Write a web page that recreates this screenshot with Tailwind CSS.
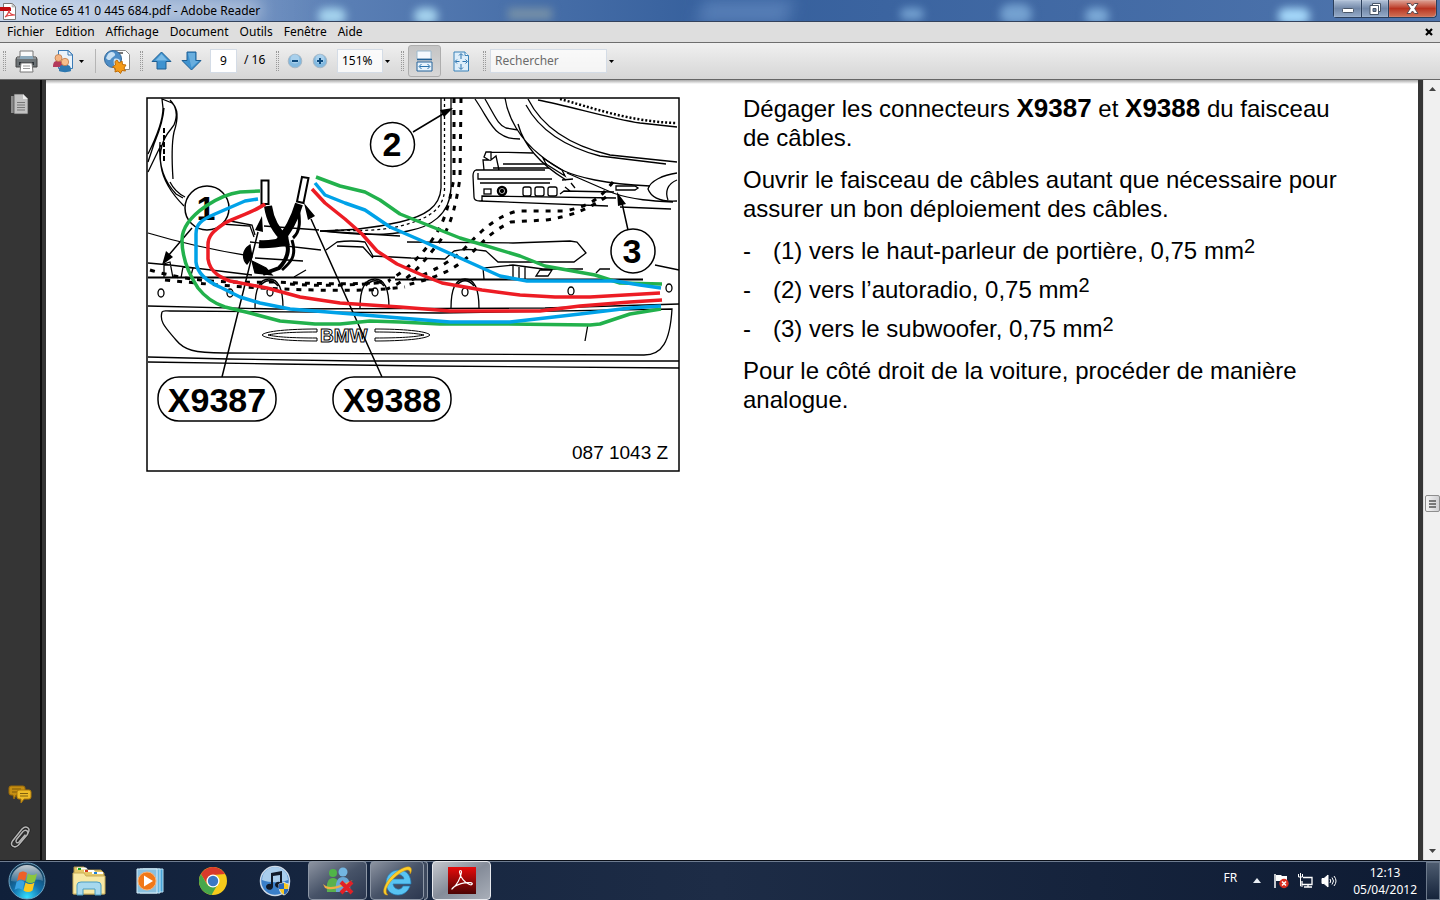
<!DOCTYPE html>
<html lang="fr">
<head>
    <meta charset="UTF-8">
    <meta name="viewport" content="width=device-width, initial-scale=1.0">
    <title>Notice 65 41 0 445 684.pdf - Adobe Reader</title>
    <script src="https://cdn.jsdelivr.net/npm/@tailwindcss/browser@4"></script>
</head>
<body>
    <div class="flex h-screen flex-col overflow-hidden bg-white font-['Noto_Sans','Open_Sans',sans-serif] text-[12px] text-black">

        <!-- Title bar -->
        <header class="relative flex h-[21px] shrink-0 items-center overflow-hidden bg-linear-to-r from-[#7c9ccb] via-[#355f9c] to-[#4f75ad]">
            <div class="absolute inset-y-0 left-0 w-[340px] bg-linear-to-r from-white/50 via-white/20 to-transparent"></div>
            <div class="absolute -left-2 top-0 h-5 w-[270px] rounded-full bg-white/40 blur-sm"></div>
            <div class="absolute left-[318px] top-2 h-4 w-7 rounded-full bg-[#a5d3ee] blur-xs"></div>
            <div class="absolute left-[414px] top-2 h-4 w-6 rounded-full bg-[#a5d3ee] blur-xs"></div>
            <div class="absolute left-[508px] top-2 h-3 w-11 bg-[#7590a8] blur-xs"></div>
            <div class="absolute left-[700px] top-0 h-6 w-[90px] -skew-x-12 bg-[#6d92c8]/60 blur-sm"></div>
            <div class="absolute left-[900px] top-2 h-3 w-6 rounded-full bg-[#8ab9e4]/70 blur-xs"></div>
            <div class="absolute left-[1000px] top-1 h-5 w-8 rounded-full bg-[#8ab9e4]/70 blur-xs"></div>
            <div class="absolute left-[1085px] top-2 h-4 w-6 rounded-full bg-[#8ab9e4]/80 blur-xs"></div>
            <div class="absolute left-[1278px] top-2 h-4 w-8 rounded-full bg-[#a5d8fa] blur-xs"></div>
            <svg class="relative h-[18px] w-[17px] shrink-0" viewBox="0 0 17 18">
                <path d="M3.500 1.500h9l3 3v13h-12z" fill="#fff" stroke="#777"/>
                <path d="M12 1.500v3.500h3.500z" fill="#ccc" stroke="#999" stroke-width=".5"/>
                <path d="M0 5h10l1 1v3H0z" fill="#c00d12"/>
                <path d="M5 15c2-1 4-5 4-7 0 4 3 5 6 5-4 0-7 0-10 2" fill="none" stroke="#d44" stroke-width="1.200"/>
            </svg>
            <h1 class="relative ml-1 whitespace-nowrap text-[12px] leading-5">Notice 65 41 0 445 684.pdf - Adobe Reader</h1>
            <div class="relative mr-[3px] ml-auto flex h-[18px] self-start rounded-b border border-t-0 border-[#2b3f5c]">
                <button aria-label="Réduire" class="flex w-7 items-center justify-center border-r border-[#2b3f5c] bg-linear-to-b from-[#b4c4da] via-[#7288a8] to-[#95abc9] shadow-[inset_0_0_1px_#fff]">
                    <svg width="12" height="5" viewBox="0 0 12 5" class="mt-[3px]"><rect x=".5" y=".5" width="11" height="4" rx="1" fill="#fff" stroke="#495668"/></svg>
                </button>
                <button aria-label="Restaurer" class="flex w-[27px] items-center justify-center border-r border-[#2b3f5c] bg-linear-to-b from-[#b4c4da] via-[#7288a8] to-[#95abc9] shadow-[inset_0_0_1px_#fff]">
                    <svg width="13" height="12" viewBox="0 0 13 12"><path d="M3.500.5h8v8h-8z" fill="#fff" stroke="#495668"/><path d="M1 2.500h8.500v9H1z" fill="#fff" stroke="#495668"/><path d="M4 5.500h3v3H4z" fill="#7288a8" stroke="#495668"/></svg>
                </button>
                <button aria-label="Fermer" class="flex w-[47px] items-center justify-center rounded-br bg-linear-to-b from-[#dda397] via-[#b93320] to-[#d07157] shadow-[inset_0_0_1px_#fff]">
                    <svg width="13" height="11" viewBox="0 0 13 11"><path d="M1 .5h3.500l2 2.500 2-2.500H12L8.700 5.500 12 10.500H8.500l-2-2.500-2 2.500H1l3.300-5z" fill="#fff" stroke="#5a4a50"/></svg>
                </button>
            </div>
        </header>

        <!-- Menu bar -->
        <nav class="flex h-[22px] shrink-0 items-center gap-[11px] border-t border-b border-t-[#33425c] border-b-[#6e6e6e] bg-[#dedede] pb-px pl-[7px]">
            <button>Fichier</button>
            <button>Edition</button>
            <button>Affichage</button>
            <button>Document</button>
            <button>Outils</button>
            <button>Fenêtre</button>
            <button>Aide</button>
            <button aria-label="Fermer le document" class="mr-[7px] ml-auto">
                <svg width="8" height="8" viewBox="0 0 8 8"><path d="M1 1l6 6M7 1L1 7" stroke="#000" stroke-width="2.200"/></svg>
            </button>
        </nav>

        <!-- Toolbar -->
        <div class="flex h-[37px] shrink-0 items-center border-b border-[#666] bg-linear-to-b from-[#f0f0f0] to-[#d6d6d6] pl-[3px]">
            <div class="h-5 w-[3px] border-x border-dotted border-[#999]"></div>
            <button aria-label="Imprimer" class="ml-[9px]">
                <svg width="23" height="24" viewBox="0 0 23 24">
                    <path d="M5 2h13v8H5z" fill="#fafafa" stroke="#777"/>
                    <path d="M2 8h19l1 2v8H1v-8z" fill="#6d7376" stroke="#444"/>
                    <path d="M2 9h19" stroke="#b5babd"/>
                    <path d="M5 7h13v3H5z" fill="#8da9bb"/>
                    <path d="M4 13h15v3H4z" fill="#2d3338"/>
                    <path d="M6 14h11l1 9H5z" fill="#fff" stroke="#777"/>
                    <path d="M8 17h7M8 19.500h7" stroke="#999"/>
                </svg>
            </button>
            <button aria-label="Collaborer" class="ml-[14px]">
                <svg width="24" height="24" viewBox="0 0 24 24">
                    <path d="M6.500 1.500h10l4 4v14h-14z" fill="#eaf3fb" stroke="#3a7ab5"/>
                    <path d="M16 1.500v4.500h4.500z" fill="#fff" stroke="#3a7ab5"/>
                    <path d="M1 18c0-4 1-6 4-6h3c2 0 3 2 3 6z" fill="#b33a5c"/>
                    <circle cx="6.500" cy="9" r="3.500" fill="#f4b483" stroke="#b8703c" stroke-width=".7"/>
                    <path d="M7 22c0-4 1-6 4-6h4c3 0 4 2 4 6-3 1.500-9 1.500-12 0" fill="#2e78b0"/>
                    <circle cx="13" cy="13" r="3.700" fill="#f7be8c" stroke="#b8703c" stroke-width=".7"/>
                </svg>
            </button>
            <button aria-label="Options de collaboration" class="ml-[3px]"><svg width="5" height="3" viewBox="0 0 5 3"><path d="M0 0h5L2.500 3z"/></svg></button>
            <div class="ml-[11px] h-6 w-px bg-[#b5b5b5]"></div>
            <button aria-label="Acrobat.com" class="ml-2">
                <svg width="27" height="25" viewBox="0 0 27 25">
                    <path d="M10.500 1.500h11l4 4v15h-15z" fill="#fff" stroke="#888"/>
                    <path d="M13 4h6" stroke="#777" stroke-width="2"/>
                    <circle cx="9" cy="10" r="8.500" fill="#4d8dc6" stroke="#356a9c"/>
                    <path d="M4 5c3-3 6-2 7 0s-3 3-4 5-4 1-5-1M10 10c3-1 6 0 6 2s-3 5-5 6c-1-2-2-5-1-8" fill="#c8e0f3"/>
                    <path d="M13 11l2 3 3-2 .5 3.500 3.500.5-2 3 1.500 3-3.500-.5-1.500 3-2.500-2.500-3 1 .5-3.500-3-1.500 3-2-.5-3.500z" fill="#f49a17" stroke="#bf6d08"/>
                </svg>
            </button>
            <div class="ml-[9px] h-5 w-[3px] border-x border-dotted border-[#999]"></div>
            <button aria-label="Page précédente" class="ml-2">
                <svg width="21" height="20" viewBox="0 0 21 20"><path d="M10.500 1L20 10.500h-5V18H6v-7.500H1z" fill="#3f93d0" stroke="#1f5f93"/><path d="M10.500 3l6 6.500h-12z" fill="#7bbbe6"/></svg>
            </button>
            <button aria-label="Page suivante" class="ml-[9px]">
                <svg width="21" height="20" viewBox="0 0 21 20"><path d="M10.500 19L20 9.500h-5V1H6v8.500H1z" fill="#3f93d0" stroke="#1f5f93"/><path d="M7 2h7v8h3.500l-7 6.500z" fill="#69aede"/></svg>
            </button>
            <input aria-label="Page" value="9" class="ml-2 h-6 w-[27px] border border-[#d4dce6] bg-white pb-[2px] text-center">
            <span class="ml-[7px] w-6 whitespace-nowrap pb-[2px]">/ 16</span>
            <div class="ml-2 h-5 w-[3px] border-x border-dotted border-[#999]"></div>
            <button aria-label="Zoom arrière" class="ml-2">
                <svg width="16" height="16" viewBox="0 0 16 16"><circle cx="8" cy="8" r="6.800" fill="#83b9df" stroke="#a7b7c4"/><circle cx="8" cy="6" r="4.500" fill="#a9d0ec"/><path d="M5 8h6" stroke="#0d4a7d" stroke-width="2"/></svg>
            </button>
            <button aria-label="Zoom avant" class="ml-[9px]">
                <svg width="16" height="16" viewBox="0 0 16 16"><circle cx="8" cy="8" r="6.800" fill="#83b9df" stroke="#a7b7c4"/><circle cx="8" cy="6" r="4.500" fill="#a9d0ec"/><path d="M5 8h6M8 5v6" stroke="#0d4a7d" stroke-width="2"/></svg>
            </button>
            <input aria-label="Zoom" value="151%" class="ml-[9px] h-6 w-[46px] border border-[#d4dce6] bg-white/80 pb-[2px] pl-1">
            <button aria-label="Niveaux de zoom" class="ml-[2px]"><svg width="5" height="3" viewBox="0 0 5 3"><path d="M0 0h5L2.500 3z"/></svg></button>
            <div class="ml-[11px] h-5 w-[3px] border-x border-dotted border-[#999]"></div>
            <button aria-label="Défilement" class="ml-1 flex h-8 w-[33px] items-center justify-center rounded-[3px] border border-[#adadad] bg-linear-to-b from-[#c4c4c4] to-[#d8d8d8]">
                <svg width="17" height="22" viewBox="0 0 17 22">
                    <path d="M1 1h14v8H1z" fill="#f5faff" stroke="#9db9cd"/><path d="M1 9.500h15" stroke="#246399" stroke-width="1.500"/>
                    <path d="M1 12h15v9H1z" fill="#e7f3fc" stroke="#246399"/>
                    <path d="M3.500 16.500h10M5.500 14l-2.500 2.500L5.500 19M11.500 14l2.500 2.500-2.500 2.500" fill="none" stroke="#2a72ad"/>
                </svg>
            </button>
            <button aria-label="Page entière" class="ml-3">
                <svg width="17" height="21" viewBox="0 0 17 21">
                    <path d="M1 1h11l3.500 3.500V20H1z" fill="#deeefa" stroke="#3b82b8"/><path d="M12 1v3.500h3.500" fill="#fff" stroke="#3b82b8"/>
                    <path d="M8 3v5M8 13v5M2.500 10.500h4M9.500 10.500h4M6 4.500l2-2 2 2M6 16.500l2 2 2-2M4 8.500l-2 2 2 2M12.500 8.500l2 2-2 2" fill="none" stroke="#2a72ad"/>
                </svg>
            </button>
            <div class="ml-[13px] h-5 w-[3px] border-x border-dotted border-[#999]"></div>
            <input aria-label="Rechercher" placeholder="Rechercher" class="ml-1 h-6 w-[117px] border border-[#d4dce6] bg-white/70 pb-px pl-1 placeholder:text-[#6b6b6b]">
            <button aria-label="Options de recherche" class="ml-[2px]"><svg width="5" height="3" viewBox="0 0 5 3"><path d="M0 0h5L2.500 3z"/></svg></button>
        </div>

        <div class="flex min-h-0 flex-1">
            <!-- Navigation panels -->
            <aside class="flex w-[42px] shrink-0 flex-col items-center border-r-2 border-[#0c0c0c] bg-[#353535] pt-[13px] pb-[10px]">
                <button aria-label="Pages">
                    <svg width="20" height="24" viewBox="0 0 20 24"><path d="M1 3h12v17H1z" fill="#8b8b8b"/><path d="M4 1h9l5 5v15H4z" fill="#c2c2c2" stroke="#444" stroke-width=".7"/><path d="M13 1v5h5z" fill="#eee"/><path d="M7 9.500h8M7 12h8M7 14.500h8M7 17h8" stroke="#777"/></svg>
                </button>
                <button aria-label="Commentaires" class="mt-auto">
                    <svg width="24" height="20" viewBox="0 0 24 20"><path d="M3 1h12q2 0 2 2v5q0 2-2 2H8l-2 4-1-4H3q-2 0-2-2V3q0-2 2-2" fill="#c58e12" stroke="#9a6a08"/><path d="M4 4h9M4 7h6" stroke="#7e5a0a"/><path d="M11 5h10q2 0 2 2v5q0 2-2 2h-5l-3 4v-4h-2q-2 0-2-2V7q0-2 2-2" fill="#eebc28" stroke="#ad780a"/><path d="M12 8.500h8M12 11h8" stroke="#80600e"/></svg>
                </button>
                <button aria-label="Pièces jointes" class="mt-5">
                    <svg width="24" height="25" viewBox="0 0 24 25" fill="none" stroke-linecap="round"><path d="M17 10l-6 7c-2 2-4 0-2.500-2.500L15 6.500c3-3 6.500 0 4 3.500l-8.500 10c-4 4-9 .5-6-4L14 4c4-4 9-1 6 4" stroke="#222" stroke-width="3"/><path d="M17 10l-6 7c-2 2-4 0-2.500-2.500L15 6.500c3-3 6.500 0 4 3.500l-8.500 10c-4 4-9 .5-6-4L14 4c4-4 9-1 6 4" stroke="#b5b5b5" stroke-width="1.500"/></svg>
                </button>
            </aside>
            <div class="w-1 shrink-0 bg-[#353535]"></div>

            <!-- Document page -->
            <main class="relative flex min-w-0 flex-1 items-start gap-[63px] overflow-hidden bg-white pl-[100px]">
                <div class="absolute inset-x-0 top-0 h-1 bg-linear-to-b from-[#aaa] to-white"></div>
                <svg class="mt-[17px] w-[534px] shrink-0" viewBox="146 97 534 375" fill="none" stroke="#000" stroke-width="1.300" font-family="'Liberation Sans', sans-serif">
                    <!-- door pillar -->
                    <path d="M164 108c-1 15-6 26-10 36l-6 18M148 172l13-27M148 154c8-16 15-32 15-46l-1-9 10 4c8 7 5 20 2 29-3 14-2 32-1 47M170 100c6 6 8 15 4 25l-3 4c-11 13-12 25-10 37 2 14 12 29 23 40M160 142c-2 25 5 40 16 52l7 4M170 182c4 8 9 12 15 15"/>
                    <path d="M164 128v33" stroke-width="2" stroke-dasharray="5 2"/>
                    <!-- window frame -->
                    <path d="M441 98v90c-1 19-16 28-41 34-30 7-50 8-80 9M451 98v90c-1 27-21 39-43 43-20 5-50 4-84 0"/>
                    <path d="M444.500 98v92c-1 20-17 29-44 36-20 5-45 5-68 4" stroke-dasharray="3 3"/>
                    <!-- seat -->
                    <path d="M475 99c11 16 16 29 24 34 7 5 12 6 21 6M485 99c10 17 13 26 21 29l12 2M505 98c3 20 15 41 35 57 18 15 30 20 55 25 20 4 35 5 55 6M528 99c13 26 40 46 82 56l67 7M526 105c14 26 40 42 74 51l66 8M538 100c32 6 70 18 102 23l37 4M518 124c6 22 22 40 48 56"/>
                    <path d="M560 99c30 8 70 23 117 24" stroke-width="2.500" stroke-dasharray="2 2"/>
                    <path d="M677 173c-14 2-27 8-29 16 3 8 12 13 29 12M677 180c-10 4-12 12-9 20M567 173l46 20c20 7 40 8 60 9M620 207l51 2M616 186h19l3 2-3 2h-19z"/>
                    <!-- module under the seat -->
                    <path d="M545 170h-69q-3 1-3 6l1 21q0 4 6 4l128 5M484 170l-1-10h6l-5-3 2-5h5v8l5-4 3 14M491 152l42 1M503 164h44M493 168h56M478 173v6h74M480 183h70M482 201v-5l134 2M560 194l4-3 50 1M543 158l3 6 19 12-3-6zM562 180l11-1M565 187l5 4M571 183l4 5"/>
                    <g fill="#fff"><rect x="484" y="189" width="7" height="5"/><rect x="523" y="187" width="8" height="9" rx="2"/><rect x="535" y="187" width="9" height="9" rx="2"/><rect x="548" y="187" width="9" height="9" rx="2"/><circle cx="502" cy="191" r="4" stroke-width="2.500"/></g>
                    <circle cx="502" cy="191" r="1.500" fill="#000"/>
                    <!-- sill -->
                    <path d="M148 233c30 9 65 17 102 23M222 224l28 2 4 11M230 221l22 4 3 10M264 226l55 4M320 231l80 5M255 258l48 3M250 242l71 8M326 250l11-8q14-2 28 0l8 14 38 2 34 1 9-8q12-3 32 0l12 11h76l12-9-9-11-7-1-57 2-106-1M337 246l26 1 10 11M148 263l22 2 82 10M164 278v-14l6-2 3 16M181 278l2-11 10 1-3 11M294 277l12-7M484 279l-1-11 30-3 30 4h40M513 265v14M519 267v12M525 267v12M540 270h12l-4 6h-12zM596 273l4-4h10M655 265l24 5"/>
                    <path d="M148 277.500h247M395 279.500h248" stroke-width="2"/>
                    <path d="M148 306l127 3 270-1 134-4M148 357l80 2 130 2h321M148 362l130 2 150 2 251 2M170 311l270 2 232-4c-2 33-10 46-28 46l-420-2c-30 0-40-3-48-13-10-12-17-18-14-28 1-2 4-1 8-1M588 324l-3 17"/>
                    <path d="M255 308c0-18 4-29 14-29s14 11 14 29M360 308c0-18 5-29 15-29s14 11 14 29M451 308c0-18 4-29 14-29s14 11 14 29M260 286c6-7 12-7 18 0M366 286c6-7 12-7 18 0M456 286c6-7 12-7 18 0"/>
                    <g fill="#fff"><ellipse cx="161" cy="293" rx="3" ry="4"/><ellipse cx="230" cy="293" rx="3" ry="4"/><ellipse cx="270" cy="292" rx="3" ry="4"/><ellipse cx="375" cy="292" rx="3" ry="4"/><ellipse cx="465" cy="292" rx="3" ry="4"/><ellipse cx="571" cy="291" rx="3" ry="4"/><ellipse cx="669" cy="288" rx="3" ry="4"/></g>
                    <path d="M317 329c-27 0-52 2-55 6 3 4 28 6 55 6v-3c-25 0-40-1-49-3 9-2 24-3 49-3zM375 329c27 0 52 2 55 6-3 4-28 6-55 6v-3c25 0 40-1 49-3-9-2-24-3-49-3z" stroke-width="1"/>
                    <text x="320" y="342" font-size="19" font-weight="bold" fill="#fff" stroke-width="1">BMW</text>
                    <!-- harness -->
                    <g stroke-width="3" stroke-dasharray="5 7">
                        <path d="M454 98v80c-6 32-10 45-22 62-10 15-25 30-44 41M461 98l-1 80c-5 34-11 52-23 67-16 20-26 34-50 44M613 182c-12 15-22 24-48 29h-48c-22 6-36 20-52 37-14 14-30 22-56 33M606 197c-18 12-36 20-61 23l-34 2c-19 9-29 20-42 34-18 16-34 22-66 30"/>
                        <path d="M150 270c40 12 80 13 120 12 40 1 80 4 120-1M165 280c60 6 100 9 150 10 40 1 65 0 90-3M290 284c30 2 60 2 95-2"/>
                    </g>
                    <g stroke-width="8">
                        <path d="M268 206c2 14 9 26 18 34M299 204c-5 17-11 26-20 38M259 244c10 1 20-1 30-3"/>
                        <path d="M285 240c6 8 2 20-6 28l-16 6" stroke-width="4"/>
                        <path d="M298 206c2 14 3 25-5 32M292 240c5 16-1 22-10 30" stroke-width="3"/>
                    </g>
                    <path d="M250 245c-8 5-8 14-3 19l5-7zM252 261l14 7 6 7-17-2z" fill="#000"/>
                    <path d="M261.500 180.500h7V204h-7zM302 177l6.500 1-5 25-6.500-1.500z" fill="#fff" stroke-width="2"/>
                    <!-- callouts -->
                    <g fill="#fff" stroke-width="1.500"><circle cx="207" cy="208" r="22" fill="none"/><circle cx="392.500" cy="144.500" r="22"/><circle cx="633" cy="251" r="22"/></g>
                    <g fill="#000" stroke="none" font-size="34" font-weight="bold" text-anchor="middle">
                        <text x="206" y="220">1</text>
                        <text x="392" y="156">2</text>
                        <text x="632" y="263">3</text>
                    </g>
                    <path d="M192 228l-24 28M413 132l30-18M628 230l-6-27M222 377l36-145M382 377l-71-158" stroke-width="1.500"/>
                    <path d="M162 265l4-14 7 6zM453 108l-9 9-4-7zM617 192l9 12-8 2zM262 216l1 16-8-2zM304 203l11 13-7 4z" fill="#000" stroke="none"/>
                    <!-- wires drawn over the plan -->
                    <g stroke-width="3.500" stroke-linejoin="round">
                        <path d="M260 191l-20 1c-15 2-25 8-34 14-16 11-24 22-24 34 0 18 8 36 16 48 7 9 15 15 27 19l25 6 30 8 35 3h25l30-3 30 1 40 2h60l90 1 10-1 30-10 31-5M316 177l24 9 25 6 15 8 20 14 15 6 45 18 60 18 25 10 50 9 25 8 42 1" stroke="#22b14c"/>
                        <path d="M258 199l-13 2-30 13c-14 6-19 10-19 20v28c1 12 12 20 26 26l18 9 20 6 30 6 50 4 60 5 50 4h60l70-8 50-6 31-2M315 183l10 12 20 8 20 7 25 17 30 13 40 18 40 18 27 5h88l25 4 21 3" stroke="#00a2e8"/>
                        <path d="M265 204c-9 7-28 13-40 19-12 8-17 13-17 22v14c2 14 14 19 22 22l37 7 33 9 40 6 60 4 50 4h90l40-5 50-4 32-2M312 189l13 14 20 16 17 15 15 17 20 13 25 11 20 8 40 7 38 5 35 2h35l70-4" stroke="#ed1c24"/>
                    </g>
                    <!-- connector labels -->
                    <g fill="#fff" stroke-width="1.500"><rect x="158" y="377" width="118" height="44" rx="21"/><rect x="333" y="377" width="118" height="44" rx="21"/></g>
                    <g fill="#000" stroke="none">
                        <text x="217" y="412" font-size="34" font-weight="bold" text-anchor="middle">X9387</text>
                        <text x="392" y="412" font-size="34" font-weight="bold" text-anchor="middle">X9388</text>
                        <text x="572" y="459" font-size="19">087 1043 Z</text>
                    </g>
                    <rect x="147" y="98" width="532" height="373" stroke-width="1.500"/>
                </svg>

                <article class="mt-[14px] flex flex-col gap-[13px] font-['Liberation_Sans',Arial,sans-serif] text-[24px] leading-[29px]">
                    <p>Dégager les connecteurs <strong class="text-[26px] leading-none">X9387</strong> et <strong class="text-[26px] leading-none">X9388</strong> du faisceau<br>de câbles.</p>
                    <p>Ouvrir le faisceau de câbles autant que nécessaire pour<br>assurer un bon déploiement des câbles.</p>
                    <ul class="flex flex-col gap-[10px]">
                        <li class="flex"><span class="w-[30px]">-</span><span>(1) vers le haut-parleur de portière, 0,75 mm<sup class="-top-[6px] text-[20px]">2</sup></span></li>
                        <li class="flex"><span class="w-[30px]">-</span><span>(2) vers l’autoradio, 0,75 mm<sup class="-top-[6px] text-[20px]">2</sup></span></li>
                        <li class="flex"><span class="w-[30px]">-</span><span>(3) vers le subwoofer, 0,75 mm<sup class="-top-[6px] text-[20px]">2</sup></span></li>
                    </ul>
                    <p>Pour le côté droit de la voiture, procéder de manière<br>analogue.</p>
                </article>
            </main>

            <div class="w-[5px] shrink-0 bg-[#353535]"></div>
            <!-- Scroll bar -->
            <div class="flex w-[17px] shrink-0 flex-col items-center border-l border-[#ddd] bg-[#f0f0f0] py-[6px]">
                <button aria-label="Défiler vers le haut"><svg width="7" height="4" viewBox="0 0 7 4" class="my-px"><path d="M3.500 0L7 4H0z" fill="#444"/></svg></button>
                <div class="flex-[405]"></div>
                <button aria-label="Position" class="flex h-[17px] w-[15px] items-center justify-center rounded-[2px] border border-[#8e8e8e] bg-linear-to-r from-[#f5f5f5] to-[#d0d0d3]">
                    <svg width="7" height="8" viewBox="0 0 7 8"><path d="M0 1h7M0 4h7M0 7h7" stroke="#555" stroke-width="1.500"/></svg>
                </button>
                <div class="flex-[337]"></div>
                <button aria-label="Défiler vers le bas"><svg width="7" height="4" viewBox="0 0 7 4" class="my-px"><path d="M0 0h7L3.500 4z" fill="#444"/></svg></button>
            </div>
        </div>

        <!-- Taskbar -->
        <footer class="flex h-10 shrink-0 items-center border-t border-[#0a0f18] bg-linear-to-r from-[#10203a] via-[#1d2c46] to-[#0e1b33] pl-2 text-white shadow-[inset_0_1px_0_#6e7c90]">
            <button aria-label="Démarrer">
                <svg width="38" height="38" viewBox="0 0 38 38">
                    <defs>
                        <radialGradient id="orb" cx=".5" cy=".95" r=".9"><stop offset="0" stop-color="#35e0ff"/><stop offset=".45" stop-color="#1272ae"/><stop offset="1" stop-color="#16364f"/></radialGradient>
                        <linearGradient id="gloss" x2="0" y2="1"><stop offset="0" stop-color="#fff" stop-opacity=".75"/><stop offset="1" stop-color="#fff" stop-opacity=".15"/></linearGradient>
                    </defs>
                    <circle cx="19" cy="19" r="18" fill="url(#orb)" stroke="#6fa5c4"/>
                    <path d="M3 19a16 16 0 0 1 32 0c-8-4-20 3-32 0" fill="url(#gloss)"/>
                    <path d="M11 11c3-2 5-2 8 0l-2 8c-3-2-5-2-8 0z" fill="#ee6027"/>
                    <path d="M20 11.500c3 2 6 2 9 0l-2 8c-3 2-6 2-9 0z" fill="#8cc63e"/>
                    <path d="M8.500 20c3-2 5-2 8 0l-2 8c-3-2-5-2-8 0z" fill="#3aa3e3"/>
                    <path d="M17.500 20.500c3 2 6 2 9 0l-2 8c-3 2-6 2-9 0z" fill="#fcc81e"/>
                </svg>
            </button>
            <button aria-label="Explorateur Windows" class="ml-[26px]">
                <svg width="34" height="30" viewBox="0 0 34 30">
                    <path d="M2 1h10l2 3h15l3 3v21H2z" fill="#e4c868" stroke="#a8904c"/>
                    <path d="M5 1.500h9l2 2H5zM12 4h10l1 2H12zM20 6h11v2H20z" fill="#fff"/>
                    <path d="M6 2h3v2H6z" fill="#17a321"/><path d="M13 4h3v2h-3z" fill="#d33a1d"/><path d="M22 6h3v2h-3z" fill="#1e82dc"/>
                    <path d="M1 7h11l2 3h19v18H1z" fill="#f8e9a5" stroke="#c9ad5a"/>
                    <path d="M5 29V19q0-3 4-3h16q4 0 4 3v10h-6v-6H11v6z" fill="#a6d8ee" stroke="#4a9cc0"/>
                </svg>
            </button>
            <button aria-label="Lecteur Windows Media" class="ml-[30px]">
                <svg width="28" height="28" viewBox="0 0 28 28"><path d="M7 2h20v23H7z" fill="#4aa5d8" stroke="#b7dff3"/><path d="M4 2h20v24H4z" fill="#6bb7e0" stroke="#c7e7f7"/><path d="M1 2h20v24H1z" fill="#8ac0de" stroke="#d8effa"/><circle cx="11" cy="14" r="9" fill="#f07818" stroke="#f9b176"/><path d="M8 8.500l9 5.500-9 5.500z" fill="#fff"/></svg>
            </button>
            <button aria-label="Google Chrome" class="ml-[34px]">
                <svg width="30" height="30" viewBox="0 0 30 30"><circle cx="15" cy="15" r="14" fill="#f6cb1b"/><path d="M2.900 8A14 14 0 0 1 27.100 8L15 9a7 7 0 0 0-6 9z" fill="#d93a2b"/><path d="M2.900 8A14 14 0 0 0 13.500 29l5.500-9.500a7 7 0 0 1-10.500-2z" fill="#47a74b"/><circle cx="15" cy="15" r="6.500" fill="#fff"/><circle cx="15" cy="15" r="5.200" fill="#3a78c4"/></svg>
            </button>
            <button aria-label="iTunes" class="ml-[31px]">
                <svg width="32" height="32" viewBox="0 0 32 32"><circle cx="16" cy="16" r="14.500" fill="#3a7fc9" stroke="#cfdbe8" stroke-width="1.500"/><path d="M3 15a13 13 0 0 1 26 0c-8 3-18 3-26 0" fill="#a9cdec"/><path d="M12 8l11-2v14a3.500 3 0 1 1-2-3v-7l-7 1v11a3.500 3 0 1 1-2-3z" fill="#111a2a"/><path d="M25 17c2 1.500 4 2 5 2 0 6-1 9-5 11-4-2-5-5-5-11 1 0 3-.5 5-2" fill="#f9c922" stroke="#dce6ef"/><path d="M25 18v6h-5c0-2-.5-3 0-5zM25 24h4.500c-.500 3-2 4.500-4.500 5.500z" fill="#2767bd"/></svg>
            </button>
            <button aria-label="Messenger" class="ml-[17px] flex h-[39px] w-[59px] items-center justify-center rounded-sm border border-[#8d97a6] bg-linear-to-br from-[#8d94a1] via-[#475368] to-[#2c3850]">
                <svg width="34" height="28" viewBox="0 0 34 28"><circle cx="12" cy="6" r="4" fill="#50b548"/><path d="M6 25c-1-9 1-14 6-14s7 5 6 14z" fill="#5ab14d"/><circle cx="22" cy="5" r="4.500" fill="#73b6e2"/><path d="M15 25c-1-9 1-15 7-15s8 6 7 15z" fill="#69a8d6"/><path d="M2 17c6 6 16 2 30-4-8 6-20 12-28 8z" fill="#efae45"/><path d="M20 15l11 11M31 15L20 26" stroke="#e12126" stroke-width="4"/></svg>
            </button>
            <button aria-label="Internet Explorer" class="ml-[3px] flex h-[39px] w-[54px] items-center justify-center rounded-sm border border-[#8d97a6] bg-linear-to-br from-[#8d94a1] via-[#475368] to-[#2c3850]">
                <svg width="32" height="32" viewBox="0 0 32 32"><path d="M29 21c-2 6-7 9-12 9C10 30 5 25 5 18S10 5 18 5s12 6 12 14H12c1 6 8 7 10 2zM12 14h11c-1-6-10-6-11 0" fill="#58c4f2" fill-rule="evenodd" stroke="#247cb8" stroke-width=".7"/><path d="M7 30c-7 1-5-9 2-17S27-1 30 3c1 2 0 5-1 6 1-8-9-3-17 5S4 28 7 30" fill="#ffcf29" stroke="#c38d13" stroke-width=".5"/></svg>
            </button>
            <div class="h-[39px] w-1 rounded-r-sm border border-l-0 border-[#8d97a6] bg-[#3d495e]"></div>
            <button aria-label="Adobe Reader" class="ml-1 flex h-[39px] w-[59px] items-center justify-center rounded-sm border border-[#e7e9ee] bg-linear-to-br from-[#c5c8ce] via-[#858c99] to-[#a9afb9]">
                <svg width="28" height="27" viewBox="0 0 28 27"><defs><linearGradient id="red" x2="0" y2="1"><stop offset="0" stop-color="#e60b0b"/><stop offset="1" stop-color="#4b0303"/></linearGradient></defs><path d="M0 0h28v27H0z" fill="url(#red)"/><path d="M4.500 21.500c4-3 8.500-11 9-16.500 0-2-2-2-2 0 .5 5 5.500 11 10 12.500 3 1 4-1.500 1-1.800-6-.5-12 1.300-16 3.800-2 1.500-3.500 3.500-2 2" fill="none" stroke="#fff" stroke-width="1.200"/></svg>
            </button>

            <div class="ml-auto flex h-full items-center">
                <span class="pb-[6px]">FR</span>
                <button aria-label="Icônes cachées" class="ml-[16px]"><svg width="8" height="5" viewBox="0 0 8 5"><path d="M4 0l4 5H0z" fill="#e8edf3"/></svg></button>
                <button aria-label="Centre de maintenance" class="ml-3"><svg width="16" height="16" viewBox="0 0 16 16"><path d="M2 1v14" stroke="#fff" stroke-width="1.500"/><path d="M3 2h5l1 1h5v6H9L8 8H3z" fill="#fff"/><circle cx="11" cy="10.500" r="4.700" fill="#d92e20"/><path d="M9 8.500l4 4M13 8.500l-4 4" stroke="#fff" stroke-width="1.500"/></svg></button>
                <button aria-label="Réseau" class="ml-2"><svg width="16" height="16" viewBox="0 0 16 16" fill="none" stroke="#fff"><path d="M6 4.500h9v7H5V8M7 14h8M11 12v2" stroke-width="1.300"/><path d="M1.500 1v3h4V1M3.500 0v4M3.500 4v9H6" /></svg></button>
                <button aria-label="Volume" class="ml-2"><svg width="16" height="16" viewBox="0 0 16 16" fill="none" stroke="#fff"><path d="M1 5.500h2L7 2v12l-4-3.500H1z" fill="#fff"/><path d="M9 6q1.500 2 0 4M11 4.500q3 3.500 0 7M13 3q4 5 0 10"/></svg></button>
                <time class="ml-4 text-center leading-[17px]">12:13<br>05/04/2012</time>
                <button aria-label="Afficher le bureau" class="ml-[9px] h-[38px] w-[14px] border border-[#6d7a8c] bg-linear-to-b from-[#4e5c70] to-[#16243b]"></button>
            </div>
        </footer>
    </div>
</body>
</html>
